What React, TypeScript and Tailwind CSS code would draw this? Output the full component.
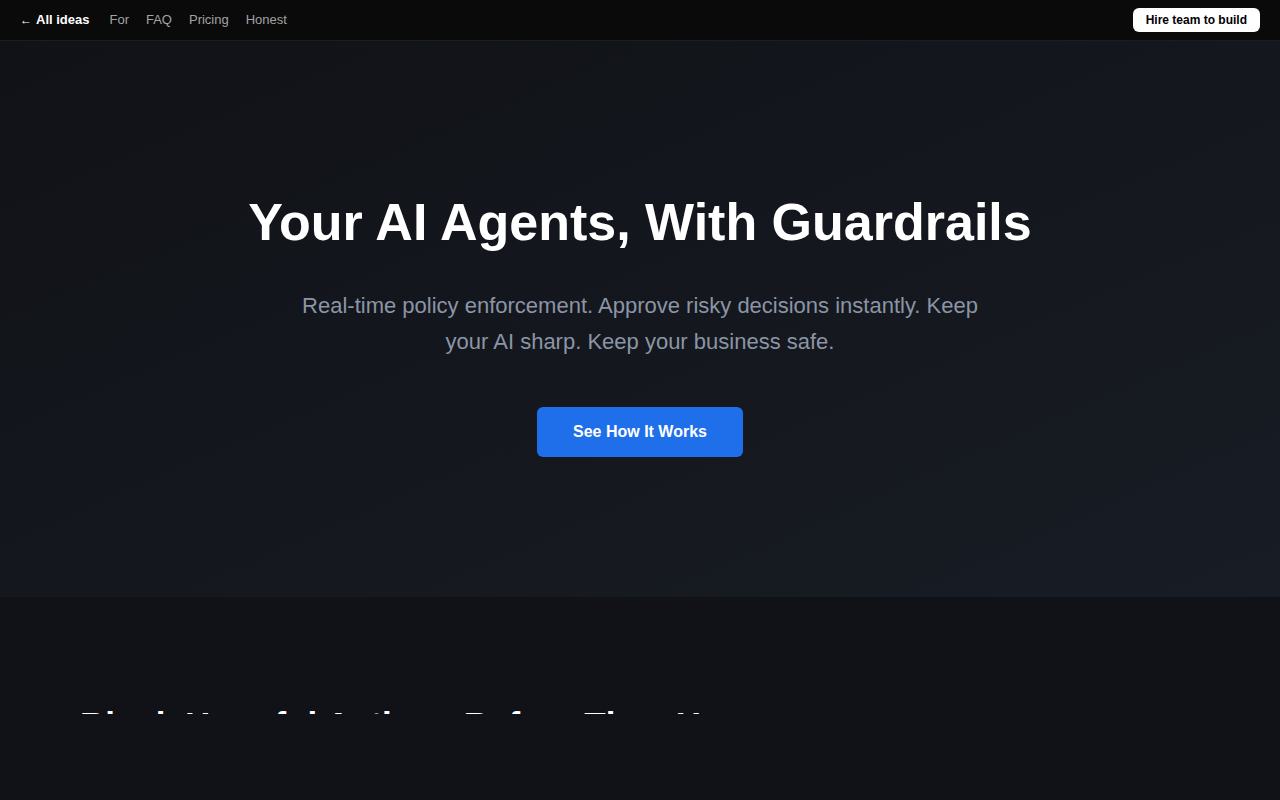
const NAV_LINKS = ["For", "FAQ", "Pricing", "Honest"];

function TopBar() {
  return (
    <header className="flex h-[41px] items-center justify-between border-b border-[#1c1d21] bg-[#0a0a0a] px-5">
      <nav className="flex items-center text-[13px]">
        <a href="#" className="mr-[20px] flex items-center font-bold text-white no-underline">
          <span className="mr-[4px] text-[12px] font-normal">←</span>
          All ideas
        </a>
        <div className="flex items-center gap-[17px] text-[#a3a3a3]">
          {NAV_LINKS.map((link) => (
            <a key={link} href="#" className="no-underline">
              {link}
            </a>
          ))}
        </div>
      </nav>
      <button className="rounded-md bg-white px-[13px] py-[5px] text-[12px] font-bold leading-[14px] text-black">
        Hire team to build
      </button>
    </header>
  );
}

function Hero() {
  return (
    <section className="bg-gradient-to-br from-[#101217] to-[#181c24] pb-[140px] pt-[151px] text-center">
      <h1 className="text-[52px] font-bold leading-[61px] text-white">
        Your AI Agents, With Guardrails
      </h1>
      <p className="mx-auto mt-[35px] max-w-[700px] text-[22px] leading-[36px] text-[#8b95a5]">
        Real-time policy enforcement. Approve risky decisions instantly. Keep your AI sharp.
        Keep your business safe.
      </p>
      <button className="mt-[47px] rounded-md bg-[#1f6feb] px-9 py-[13px] text-base font-bold leading-6 text-white">
        See How It Works
      </button>
    </section>
  );
}

function Protection() {
  return (
    <section className="min-h-[203px] bg-[#111217] pt-[108px]">
      <div className="mx-auto max-w-6xl px-4">
        <div className="h-[9px] overflow-hidden">
          <h2 className="text-[35px] font-bold leading-10 text-white">
            Block Harmful Actions Before They Happen
          </h2>
        </div>
      </div>
    </section>
  );
}

export default function App() {
  return (
    <div className="min-h-screen bg-[#111217] font-['Liberation_Sans',Arial,sans-serif]">
      <TopBar />
      <Hero />
      <Protection />
    </div>
  );
}
